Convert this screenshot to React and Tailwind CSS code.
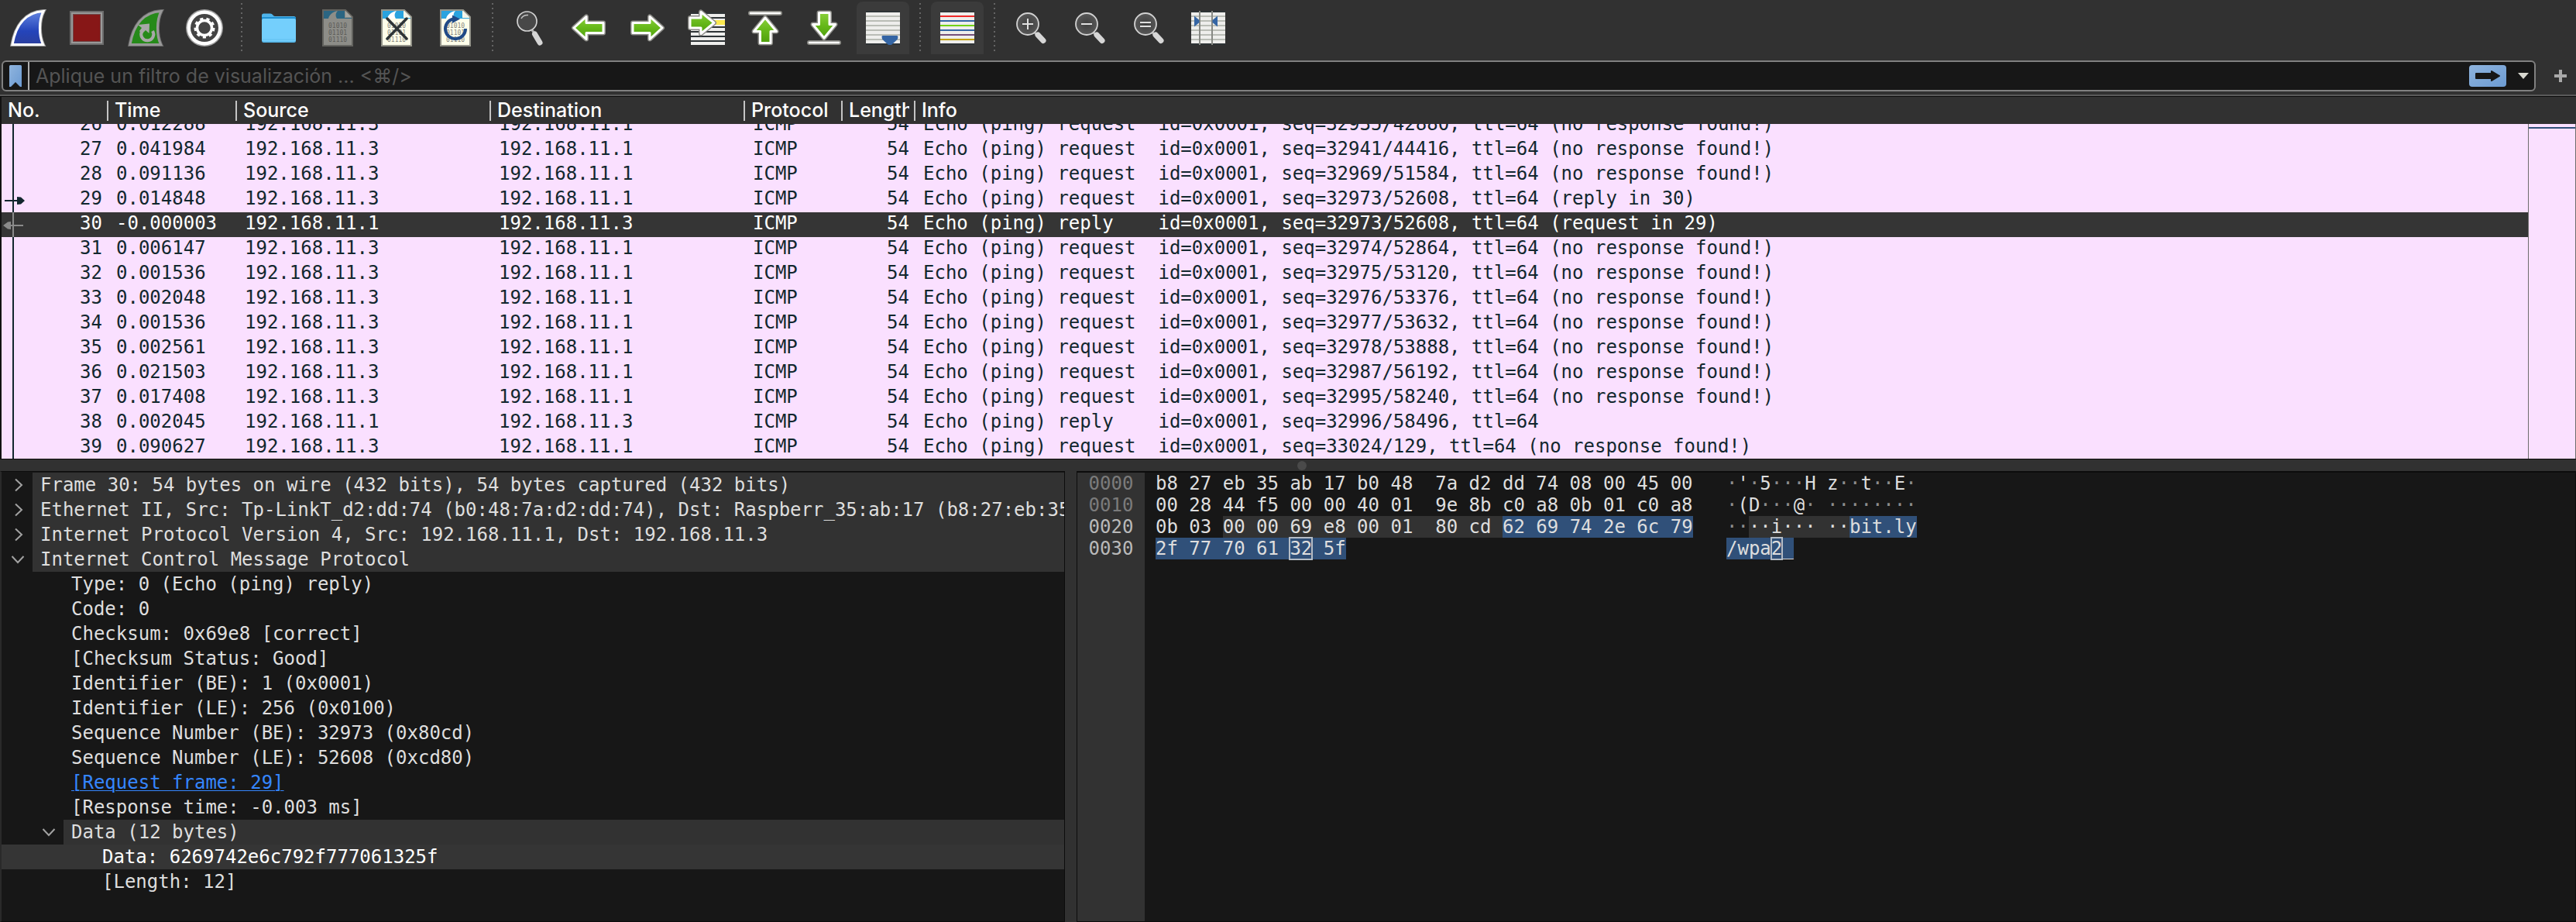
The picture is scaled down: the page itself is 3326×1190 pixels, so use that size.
const columns = [
  ["No.", "w-[138px]"],
  ["Time", "w-[166px]"],
  ["Source", "w-[328px]"],
  ["Destination", "w-[328px]"],
  ["Protocol", "w-[126px]"],
  ["Length", "w-[94px]"],
  ["Info", ""],
];

const NO_RESP = " (no response found!)";
const packets = [
  [26, "0.012288", "request", "32935/42880", NO_RESP],
  [27, "0.041984", "request", "32941/44416", NO_RESP],
  [28, "0.091136", "request", "32969/51584", NO_RESP],
  [29, "0.014848", "request", "32973/52608", " (reply in 30)"],
  [30, "-0.000003", "reply", "32973/52608", " (request in 29)"],
  [31, "0.006147", "request", "32974/52864", NO_RESP],
  [32, "0.001536", "request", "32975/53120", NO_RESP],
  [33, "0.002048", "request", "32976/53376", NO_RESP],
  [34, "0.001536", "request", "32977/53632", NO_RESP],
  [35, "0.002561", "request", "32978/53888", NO_RESP],
  [36, "0.021503", "request", "32987/56192", NO_RESP],
  [37, "0.017408", "request", "32995/58240", NO_RESP],
  [38, "0.002045", "reply", "32996/58496", ""],
  [39, "0.090627", "request", "33024/129", NO_RESP],
];

const MONO = "font-['DejaVu_Sans_Mono',monospace] text-2xl";

/* ---------- toolbar icons, drawn on a 48 x 48 grid ---------- */

function Icon({ children }) {
  return (
    <svg viewBox="0 0 48 48" className="h-12 w-12 shrink-0" aria-hidden="true">
      {children}
    </svg>
  );
}

function Defs() {
  return (
    <svg className="absolute h-0 w-0" aria-hidden="true">
      <defs>
        <linearGradient id="leaf" x1="0" y1="0" x2="0" y2="1">
          <stop offset="0" stopColor="#8ad03a" />
          <stop offset="0.5" stopColor="#66b81a" />
          <stop offset="1" stopColor="#4e9f0c" />
        </linearGradient>
        <linearGradient id="finBlue" x1="0" y1="0" x2="0" y2="1">
          <stop offset="0" stopColor="#6384e0" />
          <stop offset="0.6" stopColor="#2444ba" />
          <stop offset="1" stopColor="#2c3f9e" />
        </linearGradient>
        <linearGradient id="sky" x1="0" y1="0" x2="1" y2="1">
          <stop offset="0" stopColor="#8fb4de" />
          <stop offset="1" stopColor="#6c9bd2" />
        </linearGradient>
        <radialGradient id="glass">
          <stop offset="0" stopColor="#3e3e3e" />
          <stop offset="1" stopColor="#585858" />
        </radialGradient>
      </defs>
    </svg>
  );
}

const FIN = "M4 45.5 C8 22 20 4 44 2.5 C38 14 38 34 43.5 45.5 Z";

function StartIcon() {
  return (
    <Icon>
      <path d={FIN} fill="none" stroke="#9a9a9a" strokeWidth="5" />
      <path d={FIN} fill="url(#finBlue)" stroke="#ffffff" strokeWidth="3" />
    </Icon>
  );
}

function StopIcon() {
  return (
    <Icon>
      <rect x="2" y="2" width="44" height="44" fill="#6c6c6c" />
      <rect x="4" y="4" width="40" height="40" fill="#999999" />
      <rect x="6" y="6" width="36" height="36" fill="#6e4a4a" />
      <rect x="7" y="7" width="34" height="34" fill="#871717" />
    </Icon>
  );
}

function RestartIcon() {
  return (
    <Icon>
      <path d={FIN} fill="none" stroke="#6a6a6a" strokeWidth="5" />
      <path d={FIN} fill="#268a1a" stroke="#999999" strokeWidth="3" />
      <path d="M19 29 A8 8 0 1 0 33 28" fill="none" stroke="#a8a8a8" strokeWidth="4" />
      <path d="M14 20 L29 18.5 L28.5 31 L24 27 L19 32 L16 28 L19 24 Z" fill="#a8a8a8" />
    </Icon>
  );
}

function OptionsIcon() {
  return (
    <Icon>
      <circle cx="24" cy="24" r="24" fill="#a0a0a0" />
      <circle cx="24" cy="24" r="22.5" fill="#ffffff" />
      <circle cx="24" cy="24" r="18" fill="#444444" />
      <circle cx="24" cy="24" r="9.5" fill="none" stroke="#ffffff" strokeWidth="3.5" />
      <circle cx="24" cy="24" r="12" fill="none" stroke="#ffffff" strokeWidth="3" strokeDasharray="4.2 4.178" />
    </Icon>
  );
}

function FolderIcon() {
  return (
    <Icon>
      <path d="M2 8 Q2 5.5 4.500 5.500 H13 Q15 5.500 16.500 7.500 Q17.500 9 19.500 9 H43.500 Q46 9 46 11.500 V20 H2 Z" fill="#4fb4ea" />
      <path d="M2 10 H46 V20 H2 Z" fill="#1f8fd0" />
      <rect x="2" y="12" width="44" height="31" rx="2.500" fill="#52b2e4" />
      <rect x="2" y="12" width="44" height="29.500" rx="2.500" fill="#74cffc" />
      <path d="M3 39 H45" stroke="#60c0f0" strokeWidth="1" />
    </Icon>
  );
}

function FilePage({ dim, children }) {
  return (
    <Icon>
      <path d="M5 1 H34 L43 10 V47 H5 Z" fill={dim ? "#8d8d88" : "#fefeea"} stroke={dim ? "#63635f" : "#94948a"} strokeWidth="2" />
      <path d="M6 2 H33 V11 H42 V12 H6 Z" fill={dim ? "#2b6582" : "#2aa3df"} />
      <path d="M12 12 C13 7 18 3 24 2 C21 5 21 9 23 12 Z" fill={dim ? "#8d8d88" : "#ffffff"} />
      <path d="M34 2 L42 10 H34 Z" fill={dim ? "#a4a4a0" : "#f4f4ea"} />
      <g fontFamily="DejaVu Sans Mono, monospace" fontSize="8" fill={dim ? "#5c5c58" : "#88887e"}>
        <text x="12" y="24">01010</text>
        <text x="12" y="33">01101</text>
        <text x="12" y="42">01110</text>
      </g>
      {children}
    </Icon>
  );
}

function CloseFileIcon() {
  return (
    <FilePage>
      <path d="M12 12 L37 38 M37 12 L12 38" stroke="#2e3436" strokeWidth="3.5" strokeLinecap="round" />
    </FilePage>
  );
}

function ReloadIcon() {
  return (
    <FilePage>
      <path d="M21 12.500 A13 13 0 1 0 37 25" fill="none" stroke="#204a87" strokeWidth="4" />
      <path d="M20 7.500 L30 12.500 L20 18 Z" fill="#204a87" />
    </FilePage>
  );
}

function FindIcon() {
  return (
    <Icon>
      <path d="M27 27 L31 32" stroke="#b5b5b5" strokeWidth="3" />
      <path d="M30.500 32 L37 43" stroke="#d6d6d6" strokeWidth="7" strokeLinecap="round" />
      <circle cx="20.500" cy="15.500" r="12.500" fill="#484848" stroke="#d2d2d2" strokeWidth="1.700" />
      <path d="M13 12 Q15.500 7 22 7.500" fill="none" stroke="#c4c4c4" strokeWidth="1.500" />
    </Icon>
  );
}

function GreenShape({ d }) {
  return (
    <>
      <path d={d} fill="none" stroke="#8b8b86" strokeWidth="6" strokeLinejoin="round" />
      <path d={d} fill="url(#leaf)" stroke="#ffffff" strokeWidth="3" strokeLinejoin="round" />
    </>
  );
}

function Bar({ y }) {
  return (
    <>
      <path d={`M5 ${y} H43`} stroke="#8b8b86" strokeWidth="6" strokeLinecap="round" />
      <path d={`M5 ${y} H43`} stroke="#ffffff" strokeWidth="2.500" strokeLinecap="round" />
    </>
  );
}

function PrevIcon() {
  return (
    <Icon>
      <GreenShape d="M5 24 L21 9.500 V17.500 H43 V30.500 H21 V38.500 Z" />
    </Icon>
  );
}

function NextIcon() {
  return (
    <Icon>
      <GreenShape d="M43 24 L27 9.500 V17.500 H5 V30.500 H27 V38.500 Z" />
    </Icon>
  );
}

const LINES = [8, 14, 20, 26, 32, 38];

function GotoIcon() {
  return (
    <Icon>
      <rect x="4" y="4" width="44" height="42" fill="#2e3436" />
      {[6, 12, 18, 24, 30, 36, 42].map((y) => (
        <rect key={y} x="4" y={y} width="44" height="4" fill="#eeeeec" />
      ))}
      <rect x="30" y="14" width="18" height="6" fill="#fce94f" />
      <GreenShape d="M34 17.500 L17 3.500 V11 H3 V24 H17 V31.500 Z" />
    </Icon>
  );
}

function FirstIcon() {
  return (
    <Icon>
      <Bar y={5} />
      <GreenShape d="M24 11 L38.500 28.500 H31 V43.500 H17.500 V28.500 H9.500 Z" />
    </Icon>
  );
}

function LastIcon() {
  return (
    <Icon>
      <GreenShape d="M24 37 L38.500 19.500 H31 V4.500 H17.500 V19.500 H9.500 Z" />
      <Bar y={43} />
    </Icon>
  );
}

function LinedPage({ colors }) {
  return (
    <>
      <rect x="2" y="2" width="44" height="44" fill="#2e3436" />
      <rect x="2" y="4" width="44" height="40" fill="#eeeeec" />
      {LINES.map((y, i) => (
        <rect key={y} x="2" y={y} width="44" height="2" fill={colors ? colors[i] : "#babdb6"} />
      ))}
    </>
  );
}

function AutoScrollIcon() {
  return (
    <Icon>
      <LinedPage />
      <path d="M24 35.500 H42 L41.500 38 L34.500 44.500 H31.500 L24.500 38 Z" fill="#3465a4" stroke="#3465a4" strokeWidth="3" strokeLinejoin="round" />
    </Icon>
  );
}

function ColorizeIcon() {
  return (
    <Icon>
      <LinedPage colors={["#ef2929", "#3465a4", "#73d216", "#3465a4", "#75507b", "#c4a000"]} />
    </Icon>
  );
}

function ZoomIcon({ sign }) {
  return (
    <Icon>
      <path d="M28 30 L32 34" stroke="#b5b5b5" strokeWidth="3" />
      <path d="M32 33 L39 40.500" stroke="#d6d6d6" strokeWidth="7" strokeLinecap="round" />
      <circle cx="19" cy="19" r="14" fill="url(#glass)" stroke="#d2d2d2" strokeWidth="1.800" />
      <path d={sign} stroke="#e0e0e0" strokeWidth="2" fill="none" />
    </Icon>
  );
}

function ResizeIcon() {
  return (
    <Icon>
      <LinedPage />
      <path d="M13 2 V46 M29 2 V46" stroke="#888a85" strokeWidth="2" />
      <path d="M6 8.500 L12.500 14 V17 L6 22.500 Z M36 8.500 L29.500 14 V17 L36 22.500 Z" fill="#3465a4" />
    </Icon>
  );
}

function ToolButton({ label, pressed, children }) {
  return (
    <button
      type="button"
      aria-label={label}
      aria-pressed={pressed}
      className={
        pressed
          ? "flex h-17 w-17 shrink-0 items-center justify-center rounded-t-lg bg-[#3b3b3b]"
          : "flex h-17 w-17 shrink-0 items-center justify-center"
      }
    >
      {children}
    </button>
  );
}

function Separator() {
  return (
    <div className="flex w-3 shrink-0 flex-col items-center gap-1 pt-0.5">
      {Array.from({ length: 11 }, (_, i) => (
        <span key={i} className="h-0.5 w-0.5 bg-[#646464]" />
      ))}
    </div>
  );
}

function Toolbar() {
  return (
    <div role="toolbar" aria-label="Main toolbar" className="flex gap-2 overflow-hidden p-0.5">
      <ToolButton label="Start capture"><StartIcon /></ToolButton>
      <ToolButton label="Stop capture"><StopIcon /></ToolButton>
      <ToolButton label="Restart capture"><RestartIcon /></ToolButton>
      <ToolButton label="Capture options"><OptionsIcon /></ToolButton>
      <Separator />
      <ToolButton label="Open file"><FolderIcon /></ToolButton>
      <ToolButton label="Save file"><FilePage dim /></ToolButton>
      <ToolButton label="Close file"><CloseFileIcon /></ToolButton>
      <ToolButton label="Reload file"><ReloadIcon /></ToolButton>
      <Separator />
      <ToolButton label="Find packet"><FindIcon /></ToolButton>
      <ToolButton label="Previous packet"><PrevIcon /></ToolButton>
      <ToolButton label="Next packet"><NextIcon /></ToolButton>
      <ToolButton label="Go to packet"><GotoIcon /></ToolButton>
      <ToolButton label="First packet"><FirstIcon /></ToolButton>
      <ToolButton label="Last packet"><LastIcon /></ToolButton>
      <ToolButton label="Auto scroll" pressed><AutoScrollIcon /></ToolButton>
      <Separator />
      <ToolButton label="Colorize packets" pressed><ColorizeIcon /></ToolButton>
      <Separator />
      <ToolButton label="Zoom in"><ZoomIcon sign="M12 19 H26 M19 12 V26" /></ToolButton>
      <ToolButton label="Zoom out"><ZoomIcon sign="M12 19 H26" /></ToolButton>
      <ToolButton label="Normal size"><ZoomIcon sign="M12 17 H26 M12 22 H26" /></ToolButton>
      <ToolButton label="Resize columns"><ResizeIcon /></ToolButton>
    </div>
  );
}

/* ---------- display filter ---------- */

function FilterBar() {
  return (
    <div className="flex items-center pt-1.5 pb-1 pl-0.5">
      <div className="flex h-10 flex-1 items-center rounded-md border-2 border-[#808080] bg-[#171717]">
        <button type="button" aria-label="Filter bookmarks" className="flex h-full w-8 items-center justify-center">
          <svg viewBox="0 0 16 28" className="h-7 w-4" aria-hidden="true">
            <path d="M0 1.500 Q0 0 1.500 0 H14.500 Q16 0 16 1.500 V28 H14 L8 22 L2 28 H0 Z" fill="url(#sky)" />
          </svg>
        </button>
        <input
          type="text"
          aria-label="Filtro de visualización"
          placeholder="Aplique un filtro de visualización ... <⌘/>"
          className="h-full min-w-0 flex-1 border-l-2 border-[#b0b0b0] bg-transparent pl-2 font-[Inter,'DejaVu_Sans',sans-serif] text-[25px] text-white outline-none placeholder:text-[#545454]"
        />
        <button type="button" aria-label="Apply filter" className="flex h-7 w-12 items-center justify-center">
          <svg viewBox="0 0 48 28" className="h-7 w-12" aria-hidden="true">
            <rect width="48" height="28" rx="4" fill="url(#sky)" />
            <path d="M9 11 H29 V8 L39 14 L29 20 V17 H9 Z" fill="#171717" stroke="#171717" strokeWidth="2" strokeLinejoin="round" />
          </svg>
        </button>
        <button type="button" aria-label="Recent filters" className="flex h-full w-9 items-center justify-center pl-2">
          <svg viewBox="0 0 14 8" className="h-2 w-3.5" aria-hidden="true">
            <path d="M0 0 H14 L7 8 Z" fill="#d8d8d0" />
          </svg>
        </button>
      </div>
      <button type="button" aria-label="Add filter button" className="flex h-10 w-[52px] items-center justify-end pr-3">
        <svg viewBox="0 0 16 16" className="h-4 w-4" aria-hidden="true">
          <path d="M8 0 V16 M0 8 H16" stroke="#a9a9a9" strokeWidth="4" />
        </svg>
      </button>
    </div>
  );
}

/* ---------- packet list ---------- */

function Columns() {
  return (
    <colgroup>
      {columns.map(([name, width]) => (
        <col key={name} className={width} />
      ))}
    </colgroup>
  );
}

function Conversation({ no }) {
  const tone = no === 30 ? "#8a8a8a" : "#12272e";
  return (
    <svg viewBox="0 0 32 32" className="h-8 w-8 shrink-0" aria-hidden="true">
      <path d="M15 0 V32" stroke={tone} strokeWidth="2" />
      {no === 29 && <path d="M4 16 H20 V12 L25 12.500 L30 17 L25 21.500 L20 22 V18 H4 Z" fill={tone} />}
      {no === 30 && <path d="M28 16 H12 V12 L8 12.500 L2 17 L8 21.500 L12 22 V18 H28 Z" fill={tone} />}
    </svg>
  );
}

function PacketList() {
  return (
    <section aria-label="Packet list" className="border-y border-[#0c0c0c] border-l-2 border-l-[#121212]">
      <table className="w-full table-fixed font-[Inter,sans-serif] text-[25px] text-white">
        <Columns />
        <thead>
          <tr className="h-[35px]">
            {columns.map(([name]) => (
              <th key={name} scope="col" className="p-0 text-left font-medium">
                <div className="flex h-[35px] items-center">
                  <div className="min-w-0 flex-1 overflow-hidden pl-2 leading-[35px] whitespace-nowrap">{name}</div>
                  {name !== "Info" && <div className="ml-1.5 h-[26px] w-0.5 shrink-0 bg-[#c4c4c4]" />}
                </div>
              </th>
            ))}
          </tr>
        </thead>
      </table>
      <div className="flex h-[432px] overflow-hidden bg-[#fae0ff]">
        <table className={`-mt-3.5 h-fit min-w-0 flex-1 table-fixed ${MONO} leading-7 text-[#12272e]`}>
          <Columns />
          <tbody>
            {packets.map(([no, time, kind, seq, note]) => {
              const reply = kind === "reply";
              return (
                <tr key={no} className={no === 30 ? "h-8 bg-[#353535] align-top text-white" : "h-8 align-top"}>
                  <td className="p-0">
                    <div className="flex h-8 justify-between pr-2">
                      <Conversation no={no} />
                      {no}
                    </div>
                  </td>
                  <td className="py-0 pl-2.5">{time}</td>
                  <td className="py-0 pl-2.5">{reply ? "192.168.11.1" : "192.168.11.3"}</td>
                  <td className="py-0 pl-2.5">{reply ? "192.168.11.3" : "192.168.11.1"}</td>
                  <td className="py-0 pl-2.5">ICMP</td>
                  <td className="py-0 pr-2 text-right">54</td>
                  <td className="overflow-hidden py-0 pl-2.5 whitespace-pre">
                    {`Echo (ping) ${kind.padEnd(7)}  id=0x0001, seq=${seq}, ttl=64${note}`}
                  </td>
                </tr>
              );
            })}
          </tbody>
        </table>
        <div className="w-[62px] shrink-0 border-x border-[#6d6d6d] pt-1">
          <div className="h-0.5 bg-[#305079]" />
        </div>
      </div>
    </section>
  );
}

/* ---------- packet details ---------- */

const PAD = ["pl-0", "pl-10", "pl-20"];

const details = [
  [0, "closed", "Frame 30: 54 bytes on wire (432 bits), 54 bytes captured (432 bits)"],
  [0, "closed", "Ethernet II, Src: Tp-LinkT_d2:dd:74 (b0:48:7a:d2:dd:74), Dst: Raspberr_35:ab:17 (b8:27:eb:35:ab:17)"],
  [0, "closed", "Internet Protocol Version 4, Src: 192.168.11.1, Dst: 192.168.11.3"],
  [0, "open", "Internet Control Message Protocol"],
  [1, "leaf", "Type: 0 (Echo (ping) reply)"],
  [1, "leaf", "Code: 0"],
  [1, "leaf", "Checksum: 0x69e8 [correct]"],
  [1, "leaf", "[Checksum Status: Good]"],
  [1, "leaf", "Identifier (BE): 1 (0x0001)"],
  [1, "leaf", "Identifier (LE): 256 (0x0100)"],
  [1, "leaf", "Sequence Number (BE): 32973 (0x80cd)"],
  [1, "leaf", "Sequence Number (LE): 52608 (0xcd80)"],
  [1, "link", "[Request frame: 29]"],
  [1, "leaf", "[Response time: -0.003 ms]"],
  [1, "open", "Data (12 bytes)"],
  [2, "selected", "Data: 6269742e6c792f777061325f"],
  [2, "leaf", "[Length: 12]"],
];

function TreeRow({ level, kind, text }) {
  const branch = kind === "open" || kind === "closed";
  return (
    <li className={kind === "selected" ? "bg-[#353535] text-white" : ""}>
      <div className={`flex h-8 ${PAD[level]}`}>
        <div className="flex w-10 shrink-0 items-center justify-center pl-0.5">
          {branch && (
            <button type="button" aria-expanded={kind === "open"} aria-label={text}>
              <svg viewBox="0 0 20 20" className="h-5 w-5" aria-hidden="true">
                <path d={kind === "open" ? "M2.500 6 L10 14 L17.500 6" : "M7 2.500 L15 10 L7 17.500"} fill="none" stroke="#a2a2a2" strokeWidth="2" />
              </svg>
            </button>
          )}
        </div>
        <div className={branch ? "min-w-0 flex-1 overflow-hidden bg-[#323232] pl-2.5" : "min-w-0 flex-1 overflow-hidden pl-2.5"}>
          {kind === "link" ? (
            <a href="#frame-29" className="text-[#3586ff] underline decoration-1 underline-offset-2">
              {text}
            </a>
          ) : (
            text
          )}
        </div>
      </div>
    </li>
  );
}

/* ---------- packet bytes ---------- */

const SEL = "bg-[#305079]";
const FIELD = "bg-[#323232]";
const CURSOR = "bg-[#305079] outline-2 -outline-offset-1 outline-[#b4bcc6]";

const hexRows = [
  ["0000", [["b8 27 eb 35 ab 17 b0 48  7a d2 dd 74 08 00 45 00"]], [["·'·5···H z··t··E·"]]],
  ["0010", [["00 28 44 f5 00 00 40 01  9e 8b c0 a8 0b 01 c0 a8"]], [["·(D···@· ········"]]],
  [
    "0020",
    [["0b 03 "], ["00 00 69 e8 00 01  80 cd ", FIELD], ["62 69 74 2e 6c 79", SEL]],
    [["··"], ["··i··· ··", FIELD], ["bit.ly", SEL]],
  ],
  [
    "0030",
    [["2f 77 70 61 ", SEL], ["32", CURSOR], [" 5f", SEL]],
    [["/wpa", SEL], ["2", CURSOR], ["_", SEL]],
  ],
];

function Runs({ runs, dim }) {
  return runs.map(([text, tone], i) => (
    <span key={i} className={tone}>
      {dim && !tone
        ? text.split(/(·+)/).map((part, j) =>
            part.startsWith("·") ? (
              <span key={j} className="text-[#8c8c8c]">{part}</span>
            ) : (
              part
            )
          )
        : text}
    </span>
  ));
}

function BytesPane() {
  return (
    <section aria-label="Packet bytes" className="flex min-w-0 overflow-hidden border border-t-2 border-[#0c0c0c] bg-[#171717]">
      <table className={`h-full w-full ${MONO} leading-7 whitespace-pre text-[#dedede]`}>
        <tbody className="align-top">
          {hexRows.map(([offset, hex, ascii], i) => (
            <tr key={offset} className="h-7">
              <th
                scope="row"
                className={
                  i < 2
                    ? "w-[87px] bg-[#323232] p-0 text-center font-normal text-[#7b7b7b]"
                    : "w-[87px] bg-[#323232] p-0 text-center font-normal text-[#b9b9b9]"
                }
              >
                {offset}
              </th>
              <td className="w-[751px] py-0 pl-3.5"><Runs runs={hex} /></td>
              <td className="p-0"><Runs runs={ascii} dim /></td>
            </tr>
          ))}
          <tr>
            <td className="bg-[#323232]" />
            <td colSpan={2} />
          </tr>
        </tbody>
      </table>
    </section>
  );
}

export default function App() {
  return (
    <div className="flex min-h-screen flex-col bg-[#313131]">
      <Defs />
      <Toolbar />
      <FilterBar />
      <div className="h-0.5 bg-[#5a5a5a]" />
      <PacketList />
      <div className="flex h-[15px] items-center justify-center pl-9">
        <div className="h-3 w-3 rounded-full bg-[#4a4a4a]" />
      </div>
      <div className="grid flex-1 grid-cols-[minmax(0,1375fr)_15px_minmax(0,1936fr)]">
        <section aria-label="Packet details" className="border border-l-2 border-[#0c0c0c] border-l-[#2a2a2a] bg-[#171717] pt-px">
          <ul className={`${MONO} leading-8 whitespace-pre text-[#dedede]`}>
            {details.map(([level, kind, text]) => (
              <TreeRow key={text} level={level} kind={kind} text={text} />
            ))}
          </ul>
        </section>
        <div />
        <BytesPane />
      </div>
    </div>
  );
}
